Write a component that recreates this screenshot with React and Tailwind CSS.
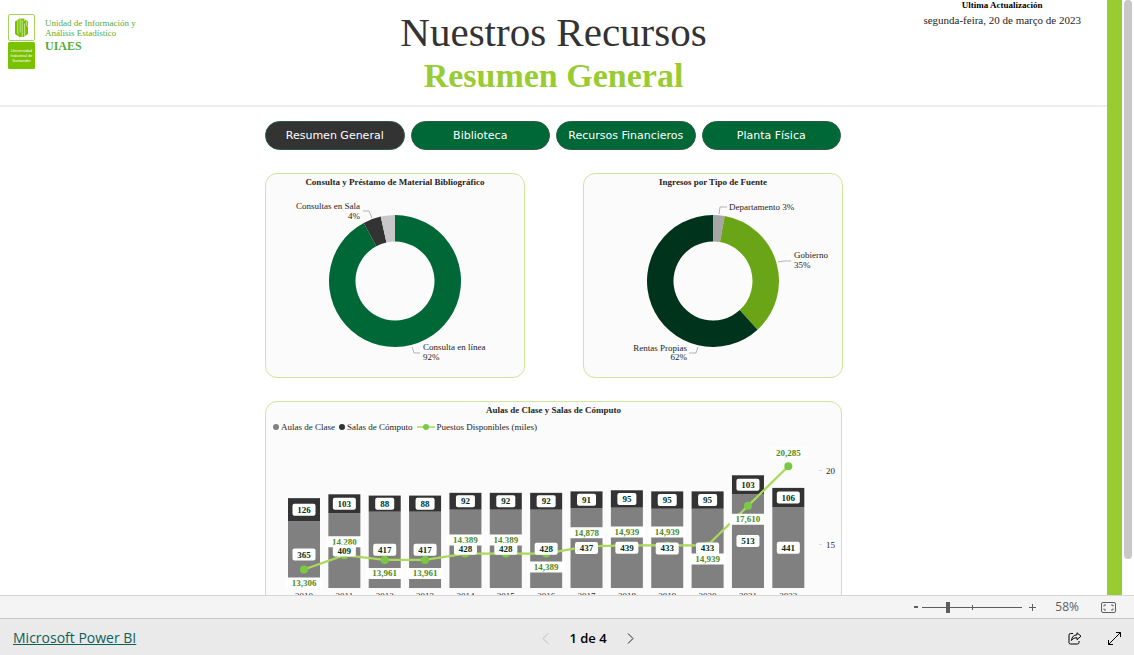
import { useState } from 'react';

const pages = ['Resumen General', 'Biblioteca', 'Recursos Financieros', 'Planta Física'];

const materialSlices = [
  { name: 'Consulta en línea', from: 0, to: 331.7, color: '#006837' },
  { name: 'Consultas en Sala', from: 331.7, to: 347.5, color: '#333333' },
  { name: 'Préstamos', from: 347.5, to: 360, color: '#c8c8c8' },
];

const materialLabels = [
  { x: 94, anchor: 'end', lines: [['Consultas en Sala', 19], ['4%', 29]], leader: '97,21 103,21 106,28' },
  { x: 157, anchor: 'start', lines: [['Consulta en línea', 160], ['92%', 170]], leader: '146,157 148,163 154,163' },
];

const incomeSlices = [
  { name: 'Departamento', from: 0, to: 10.2, color: '#a6a6a6' },
  { name: 'Gobierno', from: 10.2, to: 137.5, color: '#6aa517' },
  { name: 'Rentas Propias', from: 137.5, to: 360, color: '#00331c' },
];

const incomeLabels = [
  { x: 145, anchor: 'start', lines: [['Departamento 3%', 20]], leader: '135,24 136,17 143,17' },
  { x: 210, anchor: 'start', lines: [['Gobierno', 68], ['35%', 78]], leader: '194,72 200,71 207,71' },
  { x: 103, anchor: 'end', lines: [['Rentas Propias', 161], ['62%', 170]], leader: '105,163 112,163 114,157' },
];

const rooms = [
  { year: 2010, classrooms: 365, labs: 126, seats: 13306, below: true },
  { year: 2011, classrooms: 409, labs: 103, seats: 14280, below: false },
  { year: 2012, classrooms: 417, labs: 88, seats: 13961, below: true },
  { year: 2013, classrooms: 417, labs: 88, seats: 13961, below: true },
  { year: 2014, classrooms: 428, labs: 92, seats: 14389, below: false },
  { year: 2015, classrooms: 428, labs: 92, seats: 14389, below: false },
  { year: 2016, classrooms: 428, labs: 92, seats: 14389, below: true },
  { year: 2017, classrooms: 437, labs: 91, seats: 14878, below: false },
  { year: 2018, classrooms: 439, labs: 95, seats: 14939, below: false },
  { year: 2019, classrooms: 433, labs: 95, seats: 14939, below: false },
  { year: 2020, classrooms: 433, labs: 95, seats: 14939, below: true },
  { year: 2021, classrooms: 513, labs: 103, seats: 17610, below: true },
  { year: 2022, classrooms: 441, labs: 106, seats: 20285, below: false },
];

function ringPath(cx, cy, outer, inner, from, to) {
  const point = (r, deg) => {
    const a = (deg * Math.PI) / 180;
    return `${(cx + r * Math.sin(a)).toFixed(2)} ${(cy - r * Math.cos(a)).toFixed(2)}`;
  };
  const large = to - from > 180 ? 1 : 0;
  return `M${point(outer, from)} A${outer} ${outer} 0 ${large} 1 ${point(outer, to)} L${point(inner, to)} A${inner} ${inner} 0 ${large} 0 ${point(inner, from)} Z`;
}

function Card({ title, className = '', children }) {
  return (
    <section className={`rounded-xl border border-[#cde69a] bg-[#fbfbfb] ${className}`}>
      <h3 className="text-center text-[9px] leading-4 font-bold text-[#252423]">{title}</h3>
      {children}
    </section>
  );
}

function Donut({ slices, labels }) {
  return (
    <svg viewBox="0 0 258 187" className="block w-full">
      {slices.map((s) => (
        <path key={s.name} d={ringPath(129, 91, 66, 39.5, s.from, s.to)} fill={s.color} />
      ))}
      {labels.map((label) => (
        <g key={label.leader}>
          <polyline points={label.leader} fill="none" stroke="#b3b3b3" />
          {label.lines.map(([text, y]) => (
            <text key={text} x={label.x} y={y} textAnchor={label.anchor} fontSize="9" fill="#252423">
              {text}
            </text>
          ))}
        </g>
      ))}
    </svg>
  );
}

function ValueLabel({ x, y, width, height, radius, color, children }) {
  return (
    <g>
      <rect x={x - width / 2} y={y - height / 2} width={width} height={height} rx={radius} fill="#fff" />
      <text x={x} y={y + 3} textAnchor="middle" fontSize="9" fontWeight="bold" fill={color}>
        {children}
      </text>
    </g>
  );
}

function RoomsChart() {
  const base = 152;
  const unit = 0.183;
  const xOf = (i) => 38 + i * 40.36;
  const yOf = (seats) => 108.5 - (seats / 1000 - 15) * 14.8;

  return (
    <svg viewBox="0 0 575 190" className="block w-full">
      {rooms.map((r, i) => {
        const low = r.classrooms * unit;
        const high = r.labs * unit;
        return (
          <g key={r.year}>
            <rect x={xOf(i) - 16} y={base - low} width="32" height={low} fill="#808080" />
            <rect x={xOf(i) - 16} y={base - low - high} width="32" height={high} fill="#333333" />
            <text x={xOf(i)} y="163" textAnchor="middle" fontSize="9" fill="#252423">
              {r.year}
            </text>
          </g>
        );
      })}

      <polyline
        points={rooms.map((r, i) => `${xOf(i)},${yOf(r.seats)}`).join(' ')}
        fill="none"
        stroke="#aad95a"
        strokeWidth="2.2"
      />
      {rooms.map((r, i) => (
        <circle key={r.year} cx={xOf(i)} cy={yOf(r.seats)} r="4" fill="#7ac943" />
      ))}

      {rooms.map((r, i) => (
        <ValueLabel
          key={r.year}
          x={xOf(i)}
          y={yOf(r.seats) + (r.below ? 13.5 : -13.5)}
          width={37}
          height={11}
          radius={1}
          color="#4d8a1f"
        >
          {r.seats.toLocaleString('en-US')}
        </ValueLabel>
      ))}
      {rooms.map((r, i) => (
        <g key={r.year}>
          <ValueLabel x={xOf(i)} y={base - (r.classrooms * unit) / 2} width={23} height={12} radius={2} color="#00331c">
            {r.classrooms}
          </ValueLabel>
          <ValueLabel
            x={xOf(i)}
            y={base - (r.classrooms + r.labs / 2) * unit}
            width={r.labs > 99 ? 23 : 19}
            height={12}
            radius={2}
            color="#00331c"
          >
            {r.labs}
          </ValueLabel>
        </g>
      ))}

      {[20, 15].map((tick) => (
        <g key={tick}>
          <path d={`M553 ${yOf(tick * 1000)}h3`} stroke="#dedede" />
          <text x="560" y={yOf(tick * 1000) + 3} fontSize="9" fill="#252423">
            {tick}
          </text>
        </g>
      ))}
    </svg>
  );
}

function Legend() {
  return (
    <ul className="flex h-[18px] items-center gap-1 pl-[7px] text-[9px] leading-4 text-[#252423]">
      <li className="flex items-center gap-0.5">
        <span className="size-1.5 rounded-full bg-[#808080]" />
        Aulas de Clase
      </li>
      <li className="flex items-center gap-0.5">
        <span className="size-1.5 rounded-full bg-[#333333]" />
        Salas de Cómputo
      </li>
      <li className="flex items-center gap-0.5">
        <svg width="18" height="8" viewBox="0 0 18 8">
          <path d="M0 4h18" stroke="#aad95a" strokeWidth="1.5" />
          <circle cx="9" cy="4" r="3" fill="#7ac943" />
        </svg>
        Puestos Disponibles (miles)
      </li>
    </ul>
  );
}

function UisLogo() {
  return (
    <svg width="27" height="55" viewBox="0 0 27 55">
      <rect x="0.5" y="0.5" width="26" height="26" rx="1.5" fill="#fff" stroke="#a5d45c" />
      <path d="M11.500 4.500h4l4.500 3v12.500l-4.500 3h-4l-4.500-3v-12.500z" fill="#79c200" />
      <path
        d="M9.800 5v13q0 1.500 1 2.500M12.200 4v14.500M14.200 6v17M16.600 9.500v12.500M18.600 7.500v3.500q0 1 1.500 1.500M16.600 4v3"
        fill="none"
        stroke="#e4f4c6"
        strokeWidth="0.7"
      />
      <rect y="28" width="27" height="27" rx="1.5" fill="#79c200" />
      <g fontFamily="Liberation Sans, sans-serif" fontSize="4" fill="#fff" textAnchor="middle">
        <text x="13.5" y="38">Universidad</text>
        <text x="13.5" y="43">Industrial de</text>
        <text x="13.5" y="48">Santander</text>
      </g>
    </svg>
  );
}

function Header() {
  return (
    <header className="grid h-[107px] grid-cols-[1fr_auto_1fr] border-b-2 border-[#eeeeee]">
      <div className="flex items-start gap-2.5 pt-3.5 pl-2">
        <UisLogo />
        <div className="pt-1 text-[9px] leading-[10px] text-[#57ab3a]">
          <p>Unidad de Información y</p>
          <p>Análisis Estadístico</p>
          <p className="text-[12px] leading-4 font-bold">UIAES</p>
        </div>
      </div>
      <div className="pt-2 text-center">
        <h1 className="text-[41px] leading-[48px] text-[#333333]">Nuestros Recursos</h1>
        <h2 className="text-[34px] leading-10 font-bold text-[#99cc33]">Resumen General</h2>
      </div>
      <div className="flex justify-end pr-[26px]">
        <div className="text-center">
          <p className="text-[9px] leading-[10px] font-bold text-black">Ultima Actualización</p>
          <p className="text-[11px] leading-5 text-[#252423]">segunda-feira, 20 de março de 2023</p>
        </div>
      </div>
    </header>
  );
}

function ZoomBar({ zoom, onZoom }) {
  return (
    <div className="flex h-[23px] shrink-0 items-center justify-end border-t border-[#d6d6d6] bg-[#f4f4f4] pr-[18px] font-['Open_Sans',sans-serif] text-[#605e5c]">
      <button aria-label="Alejar" className="flex size-3 items-center justify-center" onClick={() => onZoom(zoom - 10)}>
        <svg width="4" height="2" viewBox="0 0 4 2">
          <path d="M0 1h4" stroke="currentColor" strokeWidth="2" />
        </svg>
      </button>
      <div className="relative flex w-[100px] items-center">
        <span className="absolute left-1/2 h-[5px] w-px bg-[#605e5c]" />
        <input
          type="range"
          aria-label="Zoom"
          min="10"
          max="200"
          value={zoom}
          onChange={(e) => onZoom(Number(e.target.value))}
          className="relative h-[11px] w-full appearance-none bg-transparent [&::-webkit-slider-runnable-track]:h-px [&::-webkit-slider-runnable-track]:bg-[#605e5c] [&::-webkit-slider-thumb]:-mt-[5px] [&::-webkit-slider-thumb]:h-[11px] [&::-webkit-slider-thumb]:w-1 [&::-webkit-slider-thumb]:appearance-none [&::-webkit-slider-thumb]:bg-[#605e5c]"
        />
      </div>
      <button aria-label="Acercar" className="ml-1 flex size-3 items-center justify-center" onClick={() => onZoom(zoom + 10)}>
        <svg width="7" height="7" viewBox="0 0 7 7">
          <path d="M0 3.500h7M3.500 0v7" stroke="currentColor" />
        </svg>
      </button>
      <span className="w-[41px] text-right text-[12px] leading-4">{zoom}%</span>
      <button aria-label="Ajustar a la página" className="ml-[22px]">
        <svg width="15" height="11" viewBox="0 0 15 11" fill="none" stroke="currentColor">
          <rect x="0.5" y="0.5" width="14" height="10" rx="1.5" />
          <path d="M5 3H3v1.500M3 6.500V8h2M10 3h2v1.500M12 6.500V8h-2" />
        </svg>
      </button>
    </div>
  );
}

function Footer() {
  return (
    <footer className="grid h-[37px] shrink-0 grid-cols-[1fr_auto_1fr] items-center border-t border-[#c8c6c4] bg-[#eaeaea] px-[13px] pt-0.5 font-['Open_Sans',sans-serif]">
      <a href="#powerbi" className="text-[14px] leading-5 text-[#0f5f58] underline">
        Microsoft Power BI
      </a>
      <nav className="flex items-center gap-5 pl-[42px]">
        <button aria-label="Página anterior" disabled className="text-[#bdbbb9]">
          <svg width="7" height="11" viewBox="0 0 7 11" fill="none" stroke="currentColor">
            <path d="M6 0.500L1 5.500l5 5" />
          </svg>
        </button>
        <span className="text-[13px] leading-5 font-semibold text-black">1 de 4</span>
        <button aria-label="Página siguiente" className="text-[#252423]">
          <svg width="7" height="11" viewBox="0 0 7 11" fill="none" stroke="currentColor">
            <path d="M1 0.500l5 5-5 5" />
          </svg>
        </button>
      </nav>
      <div className="flex items-center justify-end gap-[26px] text-black">
        <button aria-label="Compartir">
          <svg width="14" height="13" viewBox="0 0 14 13" fill="none" stroke="currentColor">
            <path d="M5 1.500H2.500a1.500 1.500 0 0 0-1.500 1.500v7.500a1.500 1.500 0 0 0 1.500 1.500h7a1.500 1.500 0 0 0 1.500-1.500V9" />
            <path d="M9 0.800l4 3.400-4 3.500V5.700C6.500 5.700 4.800 6.500 3.500 8.500 3.800 5 5.700 2.900 9 2.800z" strokeLinejoin="round" />
          </svg>
        </button>
        <button aria-label="Pantalla completa">
          <svg width="13" height="13" viewBox="0 0 13 13" fill="none" stroke="currentColor">
            <path d="M0.500 12.500l12-12M8 0.500h4.500V5M0.500 8v4.500H5" />
          </svg>
        </button>
      </div>
    </footer>
  );
}

export default function App() {
  const [page, setPage] = useState('Resumen General');
  const [zoom, setZoom] = useState(58);

  return (
    <div className="flex h-screen flex-col bg-white font-['Liberation_Serif',serif]">
      <div className="flex min-h-0 flex-1">
        <main className="flex-1 overflow-y-auto [scrollbar-width:none]">
          <Header />
          <div className="mx-auto max-w-[577px] pt-3.5 pb-6">
            <nav className="grid grid-cols-4 gap-1.5 pr-px font-['DejaVu_Sans',sans-serif]">
              {pages.map((name) => (
                <button
                  key={name}
                  onClick={() => setPage(name)}
                  className={`h-[29px] rounded-full border border-[#2f5a45] pt-px text-[11px] whitespace-nowrap text-white ${page === name ? 'bg-[#333333]' : 'bg-[#006837]'}`}
                >
                  {name}
                </button>
              ))}
            </nav>
            <div className="mt-[23px] grid grid-cols-[260px_260px] gap-[58px]">
              <Card title="Consulta y Préstamo de Material Bibliográfico">
                <Donut slices={materialSlices} labels={materialLabels} />
              </Card>
              <Card title="Ingresos por Tipo de Fuente">
                <Donut slices={incomeSlices} labels={incomeLabels} />
              </Card>
            </div>
            <Card title="Aulas de Clase y Salas de Cómputo" className="mt-[23px]">
              <Legend />
              <RoomsChart />
            </Card>
          </div>
        </main>
        <div className="w-[15px] bg-[#99cc33]" />
        <div className="w-3 pl-0.5">
          <div className="h-[94%] w-2 rounded-full bg-[#c8c8c8]" />
        </div>
      </div>
      <ZoomBar zoom={zoom} onZoom={setZoom} />
      <Footer />
    </div>
  );
}
